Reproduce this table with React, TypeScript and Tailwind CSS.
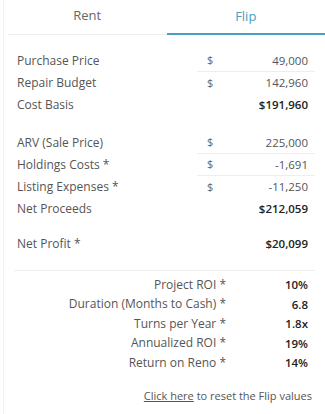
import React from 'react'

function InputRow({ label, value, last }: { label: string; value: string; last?: boolean }) {
  return (
    <div className="flex h-[22px] items-center">
      <div className="flex-1 text-[12px] text-[#555]">{label}</div>
      <div className={`flex h-full w-[118px] items-center pl-[10px] pr-[7px] ${last ? '' : 'border-b border-[#eeeeee]'}`}>
        <span className="text-[#666]">$</span>
        <span className="ml-auto text-[11.5px] text-[#555]">{value}</span>
      </div>
    </div>
  )
}

function TotalRow({ label, value }: { label: string; value: string }) {
  return (
    <div className="flex h-[22px] items-center pr-[7px]">
      <div className="flex-1 text-[12px] text-[#555]">{label}</div>
      <div className="text-[11.5px] font-semibold text-[#222]">{value}</div>
    </div>
  )
}

function Metric({ label, value }: { label: string; value: string }) {
  return (
    <div className="flex h-[19.5px] items-center">
      <div className="w-[212px] text-right text-[12px] text-[#555]">{label}</div>
      <div className="flex-1 pr-[7px] text-right text-[11.5px] font-semibold text-[#222]">{value}</div>
    </div>
  )
}

export default function App() {
  return (
    <div className="h-[414px] w-[325px] bg-white" style={{ fontFamily: '"Open Sans", sans-serif' }}>
      <div className="ml-[3px] h-full border-l border-[#f2f2f2] text-[11px]">
        <div className="flex h-[35px] pl-[4px]">
          <div className="flex flex-1 items-center justify-center border-b border-[#f0f0f0] pb-[2px] text-[13px] text-[#666]">
            Rent
          </div>
          <div className="flex flex-1 items-center justify-center border-b-2 border-[#4a9ec0] text-[13px] text-[#4a9ec0]">
            Flip
          </div>
        </div>

        <div className="pl-[13px] pr-[10px] pt-[15px]">
          <InputRow label="Purchase Price" value="49,000" />
          <InputRow label="Repair Budget" value="142,960" last />
          <TotalRow label="Cost Basis" value="$191,960" />

          <div className="h-[16px]" />
          <InputRow label="ARV (Sale Price)" value="225,000" />
          <InputRow label="Holdings Costs *" value="-1,691" />
          <InputRow label="Listing Expenses *" value="-11,250" last />
          <TotalRow label="Net Proceeds" value="$212,059" />

          <div className="h-[13px]" />
          <TotalRow label="Net Profit *" value="$20,099" />

          <div className="mt-[15px] ml-[-3px] border-t border-[#eeeeee] pt-[4px]">
            <Metric label="Project ROI *" value="10%" />
            <Metric label="Duration (Months to Cash) *" value="6.8" />
            <Metric label="Turns per Year *" value="1.8x" />
            <Metric label="Annualized ROI *" value="19%" />
            <Metric label="Return on Reno *" value="14%" />
          </div>

          <div className="mt-[15px] pr-[3px] text-right text-[11px] text-[#555]">
            <span className="underline">Click here</span> to reset the Flip values
          </div>
        </div>
      </div>
    </div>
  )
}
